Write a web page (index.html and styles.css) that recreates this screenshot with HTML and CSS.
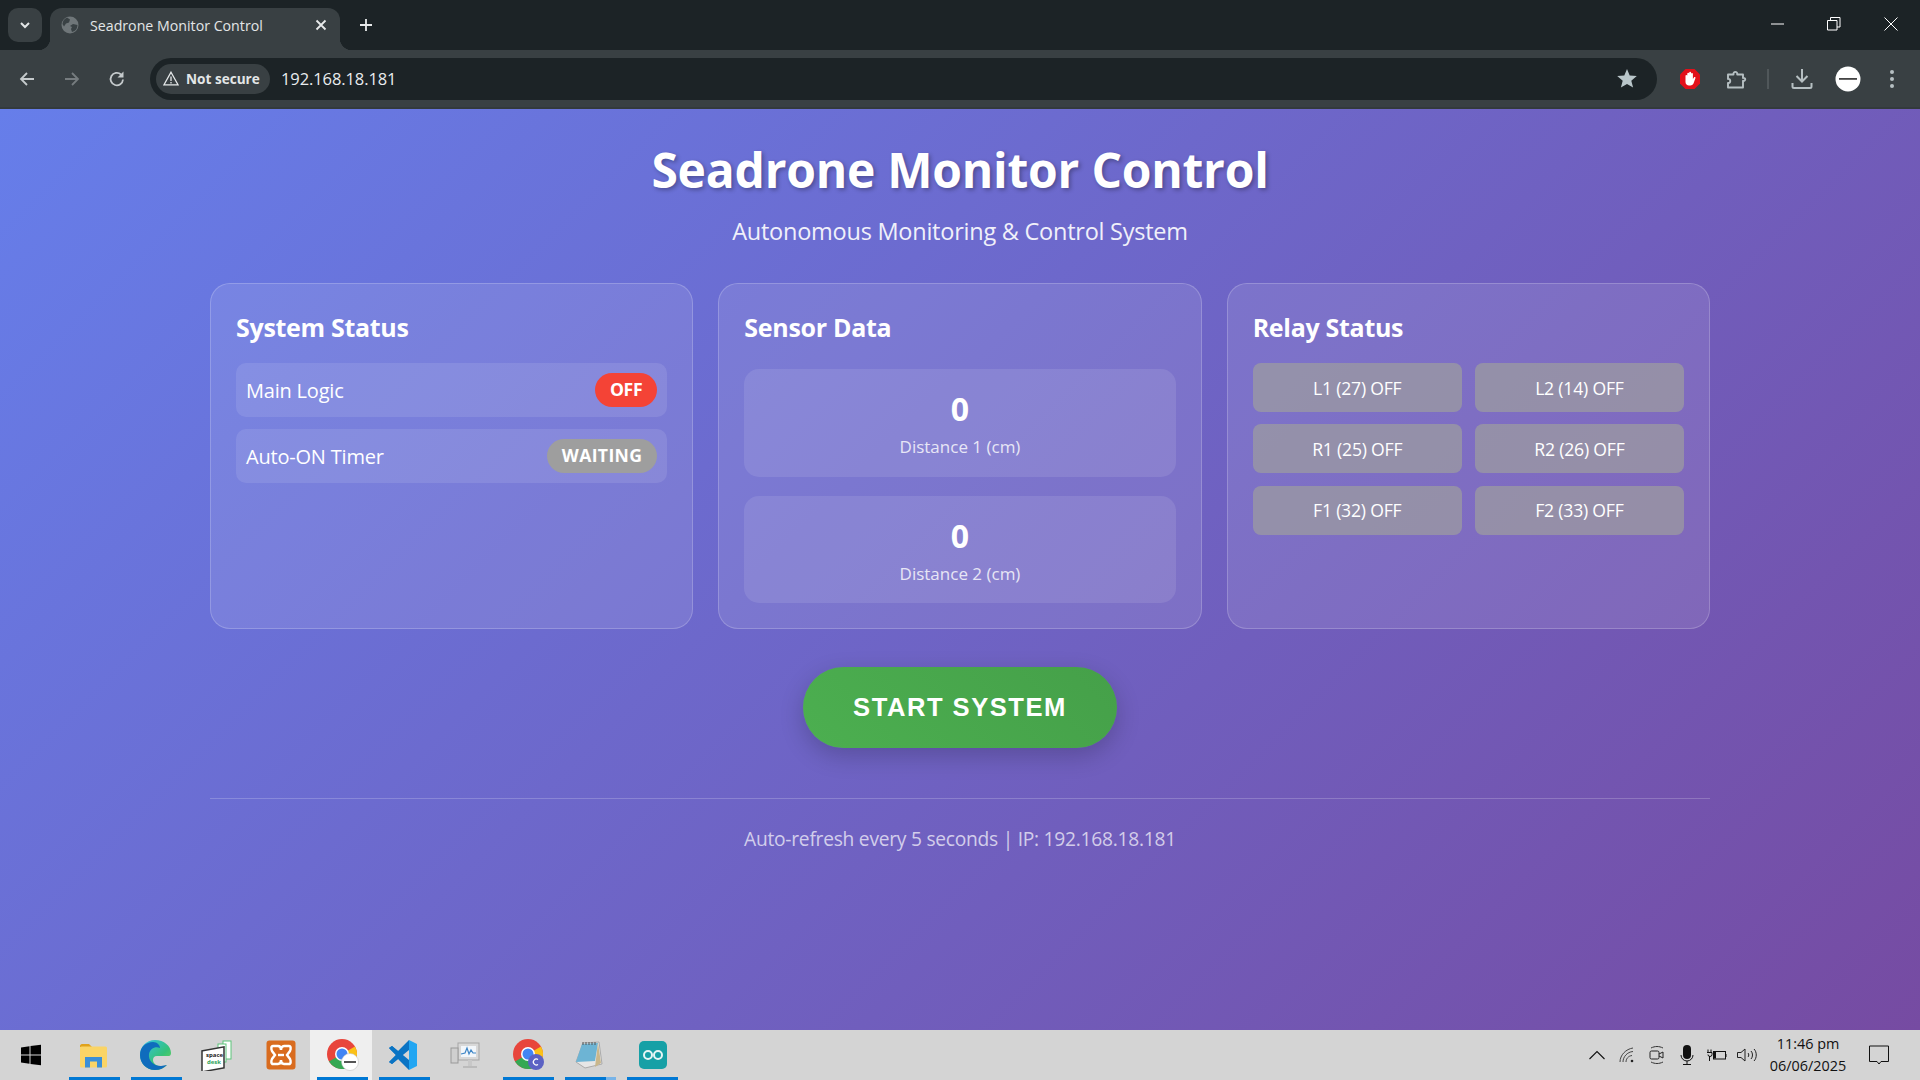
FILE: index.html
```html
<!DOCTYPE html>
<html lang="en">
<head>
<meta charset="utf-8">
<title>Seadrone Monitor Control</title>
<link rel="stylesheet" href="styles.css">
</head>
<body>
<div class="window">
  <div class="tabstrip">
    <div class="tabmenu"><svg width="14" height="14" viewBox="0 0 14 14"><path d="M3 5l4 4 4-4" fill="none" stroke="#e3e6e7" stroke-width="2"/></svg></div>
    <div class="tab">
      <svg class="favicon" width="18" height="18" viewBox="0 0 18 18"><circle cx="9" cy="9" r="8.5" fill="#6f7679"/><path d="M6 1.500l3 2-1 3-3 1-2 3-1.500-2.500A8 8 0 0 1 6 1.500zM12 8l4.500 1a7.500 7.500 0 0 1-5.500 7l-1-3 1-2-2-1z" fill="#394144"/></svg>
      <span class="tabtitle">Seadrone Monitor Control</span>
      <svg class="tabclose" width="12" height="12" viewBox="0 0 12 12"><path d="M1.500 1.500l9 9M10.500 1.500l-9 9" stroke="#e8eaeb" stroke-width="1.800"/></svg>
    </div>
    <div class="newtab"><svg width="14" height="14" viewBox="0 0 14 14"><path d="M7 1v12M1 7h12" stroke="#e8eaeb" stroke-width="1.800"/></svg></div>
    <div class="winctl">
      <svg width="14" height="14" viewBox="0 0 14 14"><path d="M0 7h13" stroke="#fff" stroke-width="1"/></svg>
      <svg width="14" height="14" viewBox="0 0 14 14"><path d="M.5 3.500h9.500v9.500H.5zM3.500 3.500V.5h9.500v9.500H10" fill="none" stroke="#fff" stroke-width="1"/></svg>
      <svg width="14" height="14" viewBox="0 0 14 14"><path d="M.5.500l13 13M13.500.500l-13 13" stroke="#fff" stroke-width="1"/></svg>
    </div>
  </div>
  <div class="toolbar">
    <div class="navs">
      <div class="navbtn"><svg width="18" height="18" viewBox="0 0 18 18"><path d="M16 9H3M9 3L3 9l6 6" fill="none" stroke="#c5cacc" stroke-width="1.800"/></svg></div>
      <div class="navbtn"><svg width="18" height="18" viewBox="0 0 18 18"><path d="M2 9h13M9 3l6 6-6 6" fill="none" stroke="#767c7f" stroke-width="1.800"/></svg></div>
      <div class="navbtn"><svg width="18" height="18" viewBox="0 0 18 18"><path d="M15 9.500A6.200 6.200 0 1 1 13 4.500" fill="none" stroke="#c5cacc" stroke-width="1.800"/><path d="M15.500 1.500v6h-6z" fill="#c5cacc"/></svg></div>
    </div>
    <div class="omnibox">
      <div class="chip">
        <svg width="16" height="15" viewBox="0 0 16 15"><path d="M8 1.200L15 13.800H1z" fill="none" stroke="#e6e9ea" stroke-width="1.300"/><path d="M8 5.500v4.500M8 11v1.500" stroke="#e6e9ea" stroke-width="1.300"/></svg>
        <span>Not secure</span>
      </div>
      <span class="url">192.168.18.181</span>
      <svg class="star" width="20" height="19" viewBox="0 0 20 19"><path d="M10 0l2.700 6.600 7.100.5-5.500 4.600 1.800 6.900L10 14.900l-6.100 3.700 1.800-6.900L.2 7.100l7.100-.5z" fill="#b9c6ca"/></svg>
    </div>
    <div class="tools">
      <div class="toolcell"><svg width="22" height="22" viewBox="0 0 22 22"><path d="M6.500 1h9L21 6.500v9L15.500 21h-9L1 15.500v-9z" fill="#e2101a"/><path d="M6.500 11V7.500a1 1 0 0 1 1.800 0V10V5.500a1 1 0 0 1 1.900 0V10V4.500a1 1 0 0 1 1.900 0V10V5.500a1 1 0 0 1 1.800 0V11l1-1.500c.8-1 2-.2 1.500.8L14.500 15.500c-.7 1.300-1.700 2-3.200 2H10c-2 0-3.500-1.500-3.500-3.500z" fill="#fff"/></svg></div>
      <div class="toolcell"><svg class="nudge" width="22" height="22" viewBox="0 0 22 22"><path d="M2 6.500h5.500c-.8-3.500 4.500-3.500 3.700 0H17V10c3-.8 3 3.500 0 2.800V19.500H2v-4.500c3 .8 3-5 0-4z" fill="none" stroke="#b6bfc2" stroke-width="1.900" stroke-linejoin="round"/></svg></div>
      <div class="toolcell"><span class="sep"></span></div>
      <div class="toolcell"><svg width="22" height="22" viewBox="0 0 22 22"><path d="M11 1v12M5.500 8l5.500 5.500L16.500 8" fill="none" stroke="#b6bfc2" stroke-width="2"/><path d="M1.500 15v3.500c0 1 .5 1.500 1.500 1.500h16c1 0 1.500-.5 1.500-1.500V15" fill="none" stroke="#b6bfc2" stroke-width="2"/></svg></div>
      <div class="toolcell"><svg width="26" height="26" viewBox="0 0 26 26"><circle cx="13" cy="13" r="12.500" fill="#fff"/><rect x="4" y="12" width="18" height="1.800" fill="#444"/></svg></div>
      <div class="toolcell"><svg width="6" height="20" viewBox="0 0 6 20"><circle cx="3" cy="3" r="2" fill="#b6bfc2"/><circle cx="3" cy="10" r="2" fill="#b6bfc2"/><circle cx="3" cy="17" r="2" fill="#b6bfc2"/></svg></div>
    </div>
  </div>

  <main class="page">
    <div class="container">
      <header class="hero">
        <h1>Seadrone Monitor Control</h1>
        <p>Autonomous Monitoring &amp; Control System</p>
      </header>
      <section class="cards">
        <article class="card">
          <h3>System Status</h3>
          <div class="status-list">
            <div class="status-row"><span>Main Logic</span><span class="pill pill-off">OFF</span></div>
            <div class="status-row"><span>Auto-ON Timer</span><span class="pill pill-wait">WAITING</span></div>
          </div>
        </article>
        <article class="card">
          <h3>Sensor Data</h3>
          <div class="sensor-list">
            <div class="sensor"><div class="value">0</div><div class="label">Distance 1 (cm)</div></div>
            <div class="sensor"><div class="value">0</div><div class="label">Distance 2 (cm)</div></div>
          </div>
        </article>
        <article class="card">
          <h3>Relay Status</h3>
          <div class="relays">
            <div class="relay">L1 (27) OFF</div>
            <div class="relay">L2 (14) OFF</div>
            <div class="relay">R1 (25) OFF</div>
            <div class="relay">R2 (26) OFF</div>
            <div class="relay">F1 (32) OFF</div>
            <div class="relay">F2 (33) OFF</div>
          </div>
        </article>
      </section>
      <div class="actions"><button class="start">START SYSTEM</button></div>
      <footer class="foot">Auto-refresh every 5 seconds | IP: 192.168.18.181</footer>
    </div>
  </main>

  <div class="taskbar">
    <div class="apps">
      <div class="app"><svg width="22" height="22" viewBox="0 0 22 22"><path d="M1 3.500l8.500-1.200v8.200H1zM10.500 2.100L21 .8v9.700H10.500zM1 11.500h8.500v8.200L1 18.500zM10.500 11.500H21v9.700l-10.500-1.300z" fill="#000"/></svg></div>
      <div class="app on"><svg width="28" height="26" viewBox="0 0 28 26"><path d="M1 4c0-1 .7-2 2-2h7l3 3H1z" fill="#e0a21c"/><rect x="1" y="4.500" width="27" height="21" rx="1.500" fill="#fad466"/><path d="M6 25.500V15h17v10.500h-5V19.500h-7v6z" fill="#3a8fd8"/></svg></div>
      <div class="app on"><svg width="32" height="32" viewBox="0 0 32 32"><defs><linearGradient id="eg" x1="0" y1="0" x2="1" y2="1"><stop offset="0" stop-color="#35c1f1"/><stop offset=".6" stop-color="#35c27a"/><stop offset="1" stop-color="#7bd44e"/></linearGradient></defs><path d="M16 1C7 1 1 8 1 16c0 8 6 15 15 15 5 0 9-2 12-5-7 3-14 0-14-5 0-2 1-4 4-4h12c1 0 2-1 2-3C32 7 25 1 16 1z" fill="url(#eg)"/><path d="M1 16C1 8 7 3 14 3c4 0 7 3 7 6-5-2-10 1-11 6-1 6 4 12 12 12l6-1c-3 3-7 5-12 5C7 31 1 24 1 16z" fill="#0f6cbd"/></svg></div>
      <div class="app"><svg width="32" height="32" viewBox="0 0 32 32"><rect x="22" y="2" width="8" height="18" fill="#fff" stroke="#5cc47a"/><rect x="17" y="5" width="8" height="18" fill="#fff" stroke="#5cc47a"/><rect x="1" y="9" width="22" height="21" fill="#fff" stroke="#333" stroke-width="1.500" transform="skewY(-10) translate(0 3)"/><text x="5" y="18" class="sd">space</text><text x="6" y="25" class="sd sd-g">desk</text></svg></div>
      <div class="app"><svg class="nudge" width="30" height="30" viewBox="0 0 30 30"><rect x=".5" y=".5" width="29" height="29" rx="3" fill="#d96c1f"/><path d="M7 6h5c2 0 3 2 3 4 0-2 1-4 3-4h5c2 0 2 3 1 5l-3 4 3 4c1 2 1 5-1 5h-5c-2 0-3-2-3-4 0 2-1 4-3 4H7c-2 0-2-3-1-5l3-4-3-4c-1-2-1-5 1-5z" fill="none" stroke="#fff" stroke-width="2.400"/><path d="M12 15h6" stroke="#fff" stroke-width="2.400"/></svg></div>
      <div class="app active on"><svg class="nudge" width="32" height="32" viewBox="0 0 32 32"><circle cx="15" cy="15" r="15" fill="#e8453c"/><path d="M15 15L2 22.500A15 15 0 0 0 19 29.500z" fill="#34a853"/><path d="M15 15l13-7.500a15 15 0 0 1-9 22z" fill="#fbc116"/><circle cx="15" cy="15" r="7" fill="#fff"/><circle cx="15" cy="15" r="5.500" fill="#4285f4"/><circle cx="23" cy="23" r="8.500" fill="#fff" stroke="#bbb" stroke-width=".5"/><rect x="17" y="22" width="12" height="2" fill="#555"/></svg></div>
      <div class="app on"><svg width="30" height="30" viewBox="0 0 30 30"><path d="M21 0l8 4v22l-8 4V0z" fill="#22a6f2"/><path d="M21 0v10L10 19l-6 5-3-2 7-7-7-7 3-2 6 5z" fill="#0a74c4"/><path d="M21 20L10 11 4 6 1 8l7 7-7 7 3 2 6-5 11 11z" fill="#0a74c4"/></svg></div>
      <div class="app"><svg width="30" height="28" viewBox="0 0 30 28"><rect x="8" y="2" width="21" height="17" fill="#d8d8d8" stroke="#a5a5a5"/><rect x="11" y="5" width="15" height="11" fill="#f2f6fa"/><path d="M11 13l4-1 2-5 2 6 2-4 2 3h3" fill="none" stroke="#3d85c6" stroke-width="1.200"/><rect x="1" y="7" width="7" height="15" fill="#cfcfcf" stroke="#999"/><path d="M13 25h14v2H13z" fill="#bbb"/><path d="M18 19h4v6h-4z" fill="#c8c8c8"/></svg></div>
      <div class="app on"><svg class="nudge" width="32" height="32" viewBox="0 0 32 32"><circle cx="15" cy="15" r="15" fill="#e8453c"/><path d="M15 15L2 22.500A15 15 0 0 0 19 29.500z" fill="#34a853"/><path d="M15 15l13-7.500a15 15 0 0 1-9 22z" fill="#fbc116"/><circle cx="15" cy="15" r="7" fill="#fff"/><circle cx="15" cy="15" r="5.500" fill="#4285f4"/><circle cx="23" cy="23" r="8" fill="#5b62c4"/><path d="M25 20.500a3 3 0 1 0 0 5" fill="none" stroke="#fff" stroke-width="1.200"/></svg></div>
      <div class="app on half"><svg width="28" height="30" viewBox="0 0 28 30"><path d="M8 3l16-1 3 22-17 4L1 22z" fill="#e6e6e6" stroke="#aaa"/><path d="M7 4l16-1-3 18-19 1z" fill="#6db4d4"/><path d="M8 2v3M11 2v3M14 2v3M17 2v3M20 2v3" stroke="#555"/><path d="M23 3l3 20-6 4z" fill="#c9b78c"/></svg></div>
      <div class="app on"><svg class="nudge" width="28" height="28" viewBox="0 0 28 28"><rect width="28" height="28" rx="5" fill="#16a0a6"/><circle cx="9" cy="14" r="4" fill="none" stroke="#e6f5f5" stroke-width="2"/><circle cx="19" cy="14" r="4" fill="none" stroke="#e6f5f5" stroke-width="2"/></svg></div>
    </div>
    <div class="tray">
      <div class="trayicon"><svg width="16" height="10" viewBox="0 0 16 10"><path d="M.5 9L8 1.500 15.500 9" fill="none" stroke="#111" stroke-width="1.100"/></svg></div>
      <div class="trayicon"><svg width="16" height="16" viewBox="0 0 16 16"><circle cx="13" cy="14" r="1.300" fill="#222"/><g fill="none" stroke="#444" stroke-width="1"><path d="M1 15C1 8 7 2 14 1M4 15C4 10 8 5 14 4.500M7 15c0-3 2-6 6-6.500"/></g></svg></div>
      <div class="trayicon"><svg width="16" height="20" viewBox="0 0 16 20"><path d="M2 3c4-2 8-2 12 0M2 17c4 2 8 2 12 0" fill="none" stroke="#333"/><rect x="1" y="6" width="9" height="8" rx="1.500" fill="none" stroke="#222"/><path d="M10 9l4-2v6l-4-2" fill="none" stroke="#222"/></svg></div>
      <div class="trayicon"><svg width="14" height="20" viewBox="0 0 14 20"><rect x="3" y="0" width="8" height="14" rx="4" fill="#111"/><path d="M1 10a6 6 0 0 0 12 0M7 16v3M3 19.500h8" fill="none" stroke="#111" stroke-width="1"/></svg></div>
      <div class="trayicon"><svg width="20" height="14" viewBox="0 0 20 14"><rect x="6.500" y="3.500" width="12" height="7.500" fill="none" stroke="#111"/><rect x="7" y="4" width="2" height="6.500" fill="#111"/><path d="M19 6v3" stroke="#111"/><path d="M1 1.500v3M4 1.500v3M0 4.500h5v2a2 2 0 0 1-4 0M2.500 8v5" fill="none" stroke="#111"/></svg></div>
      <div class="trayicon"><svg width="20" height="16" viewBox="0 0 20 16"><path d="M.5 5.500H4l4-3.500v12L4 10.500H.5z" fill="none" stroke="#222"/><path d="M11 6c1 1 1 3 0 4M14 4c2 2 2 6 0 8M17 2c3 3 3 9 0 12" fill="none" stroke="#222"/></svg></div>
    </div>
    <div class="clock"><span>11:46 pm</span><span>06/06/2025</span></div>
    <div class="notify"><svg width="20" height="20" viewBox="0 0 20 20"><path d="M.5 1h19v15.500H12L10 19l-2-2.500H.5z" fill="none" stroke="#111"/></svg></div>
  </div>
</div>
</body>
</html>
```
FILE: styles.css
```css
* { box-sizing: border-box; }
html, body { margin: 0; height: 100%; }
body { font-family: "Open Sans", "Noto Sans", sans-serif; color: #fff; overflow: hidden; }
.window { height: 100vh; display: flex; flex-direction: column; }
.nudge { margin-left: 3px; }

/* browser chrome */
.tabstrip { height: 50px; flex: none; background: #1c2326; display: flex; align-items: flex-start; padding: 8px 0 0 8px; }
.tabmenu { width: 34px; height: 34px; border-radius: 10px; background: #394043; display: flex; align-items: center; justify-content: center; }
.tab { position: relative; width: 290px; height: 42px; margin-left: 8px; background: #394043; border-radius: 12px 12px 0 0; display: flex; align-items: center; padding: 0 13px 8px 11px; }
.tab::before, .tab::after { content: ""; position: absolute; bottom: 0; width: 12px; height: 12px; }
.tab::before { left: -12px; background: radial-gradient(circle at 0 0, transparent 12px, #394043 12.500px); }
.tab::after { right: -12px; background: radial-gradient(circle at 100% 0, transparent 12px, #394043 12.500px); }
.tabtitle { font-size: 14.200px; color: #e3e6e7; margin-left: 11px; flex: 1; white-space: nowrap; }
.favicon, .tabclose { flex: none; }
.newtab { width: 28px; height: 34px; margin-left: 12px; display: flex; align-items: center; justify-content: center; }
.winctl { margin-left: auto; margin-top: -8px; height: 48px; display: grid; grid-template-columns: 56px 55px 59px; align-items: center; justify-items: center; }

.toolbar { height: 59px; flex: none; background: #394043; border-bottom: 2px solid #333a3d; display: flex; align-items: center; }
.navs { display: flex; gap: 9px; padding-left: 9px; }
.navbtn { width: 36px; height: 36px; display: flex; align-items: center; justify-content: center; }
.omnibox { flex: 1; height: 42px; margin-left: 15px; border-radius: 21px; background: #1c2326; display: flex; align-items: center; padding: 0 20px 0 6px; }
.chip { height: 30px; width: 114px; border-radius: 15px; background: #394043; display: flex; align-items: center; gap: 7px; padding-left: 7px; font-size: 13.600px; font-weight: 700; color: #e3e6e7; white-space: nowrap; }
.url { margin-left: 11px; font-size: 16.500px; color: #e9ecee; letter-spacing: -.1px; }
.star { margin-left: auto; }
.tools { width: 263px; flex: none; padding-left: 11px; display: grid; grid-template-columns: 44px 46px 20px 48px 44px 44px; }
.toolcell { height: 36px; display: flex; align-items: center; justify-content: center; }
.sep { width: 2px; height: 20px; background: #50575a; }

/* page */
.page { flex: 1; min-height: 0; background: linear-gradient(135deg, #667eea 0%, #764ba2 100%); }
.container { width: 1500px; margin: 0 auto; }
.hero { text-align: center; padding-top: 28px; }
.hero h1 { margin: 0; font-size: 48px; line-height: 66px; font-weight: 700; text-shadow: 2px 2px 4px rgba(0, 0, 0, .3); white-space: nowrap; letter-spacing: -.24px; }
.hero p { margin: 12px 0 0; font-size: 23.500px; line-height: 32px; opacity: .9; letter-spacing: -.24px; }
.cards { margin-top: 36px; display: grid; grid-template-columns: repeat(3, 1fr); gap: 25px; }
.card { background: rgba(255, 255, 255, .1); border: 1px solid rgba(255, 255, 255, .2); border-radius: 20px; padding: 25px; height: 346px; }
.card h3 { margin: 0 0 18px; font-size: 25px; line-height: 36px; font-weight: 700; letter-spacing: -.3px; }
.status-list { display: flex; flex-direction: column; gap: 12px; }
.status-row { height: 54px; padding: 0 10px; border-radius: 10px; background: rgba(255, 255, 255, .1); display: flex; align-items: center; justify-content: space-between; font-size: 20px; letter-spacing: -.2px; }
.pill { height: 34px; border-radius: 17px; padding: 0 15px; font-size: 17.600px; font-weight: 700; line-height: 33px; color: #fff; }
.pill-off { background: #f44336; letter-spacing: -.3px; }
.pill-wait { background: #9e9e9e; letter-spacing: .35px; }
.sensor-list { padding-top: 6px; display: flex; flex-direction: column; gap: 19px; }
.sensor { height: 107.500px; padding-top: 19px; border-radius: 15px; background: rgba(255, 255, 255, .1); text-align: center; }
.sensor .value { font-size: 32px; line-height: 42px; font-weight: 700; }
.sensor .label { margin-top: 3px; font-size: 17px; line-height: 28px; opacity: .8; }
.relays { display: grid; grid-template-columns: 1fr 1fr; gap: 12.400px 13px; }
.relay { height: 49px; border-radius: 8px; background: rgba(158, 158, 158, .7); display: flex; align-items: center; justify-content: center; font-size: 17.600px; letter-spacing: -.2px; white-space: nowrap; }
.actions { padding-top: 38px; display: flex; justify-content: center; }
.start { width: 314px; height: 81px; border: 0; border-radius: 41px; background: linear-gradient(45deg, #4caf50, #45a049); box-shadow: 0 8px 25px rgba(0, 0, 0, .2); color: #fff; font-family: "Liberation Sans", Arial, sans-serif; font-size: 25.600px; font-weight: 700; letter-spacing: 1.500px; }
.foot { margin-top: 50px; height: 82px; border-top: 1px solid rgba(255, 255, 255, .2); padding-top: 25px; text-align: center; font-size: 19.200px; line-height: 30px; color: rgba(255, 255, 255, .7); letter-spacing: -.25px; }

/* taskbar */
.taskbar { height: 50px; flex: none; background: #d4d4d4; display: flex; color: #111; }
.apps { display: flex; }
.app { position: relative; width: 62px; height: 50px; display: flex; align-items: center; justify-content: center; }
.app.on::after { content: ""; position: absolute; left: 7px; right: 4px; bottom: 0; height: 3px; background: #0078d4; }
.app.active { background: #efefef; }
.app.half::before { content: ""; position: absolute; right: 4px; bottom: 0; width: 10px; height: 3px; background: #78b4e8; z-index: 1; }
.sd { font-family: "Open Sans", sans-serif; font-size: 6px; font-weight: 700; fill: #222; }
.sd-g { fill: #2fa35a; }
.tray { margin-left: auto; display: flex; }
.trayicon { width: 30px; height: 50px; display: flex; align-items: center; justify-content: center; }
.clock { width: 92px; height: 50px; display: flex; flex-direction: column; align-items: center; justify-content: center; font-size: 14.400px; line-height: 22px; white-space: nowrap; }
.notify { width: 50px; height: 50px; margin-right: 16px; display: flex; align-items: center; justify-content: center; }
```
